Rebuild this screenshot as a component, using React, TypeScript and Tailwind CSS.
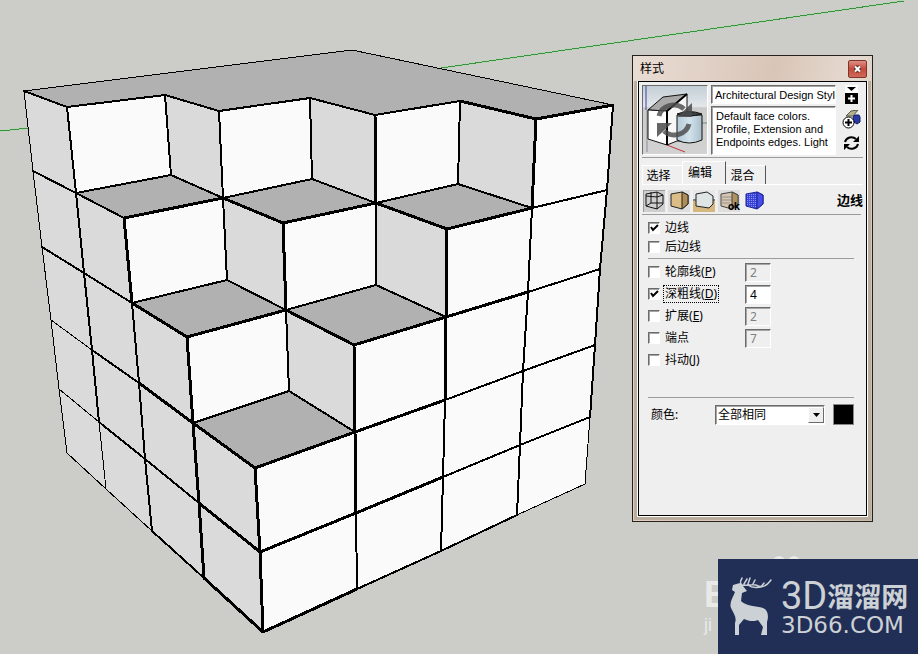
import React, { useState } from 'react';

const TOP = '#b1b1b1';
const SIDE = '#dadada';
const FRONT = '#fafafa';

const FACES: { fill: string; points: string }[] = [
    { fill: FRONT, points: '24,91 352,50 613,105 585,484 263,632 67,453' },
    { fill: TOP, points: '24,91 67,107 165,95 219,111 310,98 375,115 460,101 536,119 613,105 352,50' },
    { fill: SIDE, points: '24,91 67,107 76,193 124,218 132,303 187,337 193,423 255,468 263,632 67,453' },
    { fill: SIDE, points: '165,95 219,111 223,198 171,175' },
    { fill: SIDE, points: '310,98 375,115 376,203 312,179' },
    { fill: SIDE, points: '460,101 536,119 532,208 458,184' },
    { fill: SIDE, points: '223,198 283,223 286,310 227,280' },
    { fill: SIDE, points: '376,203 447,229 446,317 376,285' },
    { fill: SIDE, points: '286,310 354,345 355,432 289,391' },
    { fill: TOP, points: '76,193 171,175 223,198 124,218' },
    { fill: TOP, points: '223,198 312,179 376,203 283,223' },
    { fill: TOP, points: '376,203 458,184 532,208 447,229' },
    { fill: TOP, points: '132,303 227,280 286,310 187,337' },
    { fill: TOP, points: '286,310 376,285 446,317 354,345' },
    { fill: TOP, points: '193,423 289,391 355,432 255,468' },
];

// grouped by stroke width, nearer edges are heavier
const EDGES: { width: number; d: string }[] = [
    {
        width: 1,
        d: 'M24 91L352 50L613 105 M24 91L33 171L42 247L51 320L59 389L67 453 M51 320L92 350 M59 389L99 422L106 489 M67 453L106 489L152 531 M590 417L585 484L517 515',
    },
    {
        width: 2,
        d: 'M24 91L67 107L165 95L219 111L310 98L375 115L460 101 M67 107L76 193 M165 95L171 175 M219 111L223 198 M310 98L312 179 M460 101L458 184 M33 171L76 193L124 218 M76 193L171 175L223 198 M223 198L312 179L376 203L458 184L532 208L607 190 M613 105L607 190L600 269L595 345L590 417 M42 247L84 273L132 303 M76 193L84 273L92 350L99 422 M92 350L139 383 M99 422L145 459L199 503 M124 218L132 303L139 383L145 459L152 531 M132 303L227 280L286 310L376 285L446 317 M223 198L227 280 M376 203L376 285 M286 310L289 391L355 432 M193 423L289 391 M152 531L204 578 M528 292L600 269 M445 400L523 371L595 345 M443 477L520 445L590 417 M532 208L528 292L523 371L520 445L517 515 M445 400L443 477L441 551 M356 513L357 589 M357 589L441 551L517 515',
    },
    {
        width: 3,
        d: 'M460 101L536 119L613 105 M375 115L376 203 M536 119L532 208 M124 218L223 198L283 223L376 203L447 229L532 208 M124 218L132 303L187 337 M283 223L286 310 M447 229L446 317L445 400 M187 337L286 310L354 345L446 317L528 292 M139 383L193 423L255 468 M187 337L193 423L199 503L204 578L263 632 M354 345L355 432L356 513 M255 468L355 432L445 400 M199 503L260 552L356 513L443 477 M255 468L260 552L263 632L357 589',
    },
];

const Viewport = () => (
    <svg
        className="absolute inset-0 h-full w-full"
        viewBox="0 0 918 654"
        preserveAspectRatio="xMinYMin slice"
        shapeRendering="crispEdges"
    >
        <path d="M0 131L29 128M441 68L904 1" stroke="#a9dcaa" strokeWidth="2" />
        <path d="M0 131L29 128M441 68L904 1" stroke="#3f8d43" strokeWidth="1" />
        {FACES.map(f => <polygon key={f.points} fill={f.fill} points={f.points} />)}
        {EDGES.map(e => (
            <path key={e.width} d={e.d} fill="none" stroke="#000" strokeWidth={e.width} strokeLinejoin="round" strokeLinecap="round" />
        ))}
    </svg>
);

const StyleThumb = () => (
    <svg width="64" height="68" viewBox="0 0 64 68">
        <defs>
            <linearGradient id="sky" x1="0" y1="0" x2="0" y2="1">
                <stop offset="0" stopColor="#c3ced6" />
                <stop offset="0.3" stopColor="#e3e7ea" />
                <stop offset="0.32" stopColor="#cbcbca" />
                <stop offset="1" stopColor="#d2d2d2" />
            </linearGradient>
            <linearGradient id="tube" x1="0" y1="0" x2="1" y2="0">
                <stop offset="0" stopColor="#b4c9d6" />
                <stop offset="0.5" stopColor="#d3e3ec" />
                <stop offset="1" stopColor="#a9becb" />
            </linearGradient>
        </defs>
        <rect width="64" height="68" fill="url(#sky)" />
        <path d="M3 0V24" stroke="#3a43a8" />
        <path d="M4 24V66" stroke="#8b8b9c" />
        <path d="M24 59L42 66" stroke="#c2333c" />
        <path d="M59 37H64" stroke="#6f8f74" />
        <path d="M5 24L20 11L44 8L24 25Z" fill="#a9a9a9" stroke="#111" />
        <path d="M5 24L24 25V59L5 53Z" fill="#fff" stroke="#111" />
        <path d="M24 25L44 8V55H34L24 59Z" fill="#f6f6f6" stroke="#111" />
        <path d="M34 29V54Q46 60 59 54V29Z" fill="url(#tube)" stroke="#111" />
        <path d="M34 28Q46 23 59 28Q46 32 34 28Z" fill="#3b3f42" stroke="#111" />
        <path d="M24 25V59M44 8L24 25" stroke="#000" strokeWidth="2" />
        <g fill="none" stroke="#4a4a4a" strokeOpacity="0.82" strokeWidth="5">
            <path d="M16 30A15 14 0 0 1 41 23" />
            <path d="M46 38A15 14 0 0 1 21 45" />
        </g>
        <path d="M49 17V31H34ZM14 51V37H29Z" fill="#4a4a4a" fillOpacity="0.85" />
    </svg>
);

const PaneIcon = () => (
    <svg width="13" height="19" viewBox="0 0 13 19">
        <rect width="13" height="19" fill="#fff" />
        <path d="M2 2H11L6.500 6Z" fill="#000" />
        <path d="M0 8H13V19H0Z" fill="#000" />
        <path d="M6.500 10V17M3 13.500H10" stroke="#fff" strokeWidth="2" />
    </svg>
);

const CreateStyleIcon = () => (
    <svg width="19" height="19" viewBox="0 0 19 19">
        <path d="M4 6L9 1L16 0L11 6Z" fill="#b5b193" stroke="#555541" />
        <path d="M11 7L13 5H17L18 7V12L15 14L12 12Z" fill="#293aa4" stroke="#131d60" />
        <circle cx="6.500" cy="12.500" r="5.500" fill="#fff" stroke="#000" />
        <path d="M6.500 9V16M3 12.500H10" stroke="#000" strokeWidth="2" />
    </svg>
);

const UpdateIcon = () => (
    <svg width="17" height="16" viewBox="0 0 17 16">
        <path d="M2 7A6.500 6 0 0 1 13 4M15 9A6.500 6 0 0 1 4 12" fill="none" stroke="#000" strokeWidth="2" />
        <path d="M16 1V7H10ZM1 15V9H7Z" fill="#000" />
    </svg>
);

const BOX = 'M3 4L14 2L20 5V14L14 19L3 16Z';
const BOX_SIDE = 'M14 2L20 5V14L14 19Z';

const MODES: { name: string; bg: string; icon: React.ReactNode }[] = [
    {
        name: '边线设置',
        bg: 'bg-[#cfcfcf] shadow-[inset_1px_1px_0_#9a9a9a]',
        icon: <path d="M3 4L14 2L20 5V14L14 19L3 16ZM14 2V19M8 2V13M8 13H20M3 16L8 13M3 6L14 7L20 5" fill="none" stroke="#111" />,
    },
    {
        name: '平面设置',
        bg: 'bg-[#dedede]',
        icon: (
            <>
                <path d={BOX} fill="#dcbd85" stroke="#222" />
                <path d={BOX_SIDE} fill="#b08d55" stroke="#222" />
            </>
        ),
    },
    {
        name: '背景设置',
        bg: 'bg-[linear-gradient(#e8e8e8_50%,#d5b780_50%)]',
        icon: (
            <>
                <path d="M3 4L14 2L20 6V14L16 18L3 16Z" fill="#dfe4e4" stroke="#222" />
                <path d="M0 10H3M20 10H22" stroke="#222" />
            </>
        ),
    },
    {
        name: '水印设置',
        bg: 'bg-[#dedede]',
        icon: (
            <>
                <path d={BOX} fill="#d3c7b3" stroke="#444" />
                <path d="M3 7H14M3 10H14M3 13H12" stroke="#9c9281" />
                <path d={BOX_SIDE} fill="#b09260" stroke="#444" />
            </>
        ),
    },
    {
        name: '建模设置',
        bg: '',
        icon: (
            <>
                <defs>
                    <pattern id="mesh" width="2" height="2" patternUnits="userSpaceOnUse">
                        <rect width="2" height="2" fill="#3a45dc" />
                        <rect width="1" height="1" fill="#8a91ff" />
                    </pattern>
                </defs>
                <path d={BOX} fill="url(#mesh)" stroke="#1b2393" />
                <path d={BOX_SIDE} fill="#4650e8" stroke="#1b2393" />
            </>
        ),
    },
];

const SUNKEN = 'border border-[#6b6b6b] border-r-white border-b-white shadow-[inset_1px_1px_0_#a5a5a5]';

interface CheckRowProps {
    id: string;
    label: string;
    hotkey?: string;
    initial?: boolean;
    focused?: boolean;
    value?: string;
}

const CheckRow: React.FC<CheckRowProps> = ({ id, label, hotkey, initial = false, focused, value }) => {
    const [checked, setChecked] = useState(initial);
    return (
        <div className="flex h-[22px] items-center">
            <span className="relative mr-1 h-3 w-3">
                <input
                    id={id}
                    type="checkbox"
                    checked={checked}
                    onChange={e => setChecked(e.target.checked)}
                    className={`block h-3 w-3 appearance-none bg-white ${SUNKEN}`}
                />
                {checked && (
                    <svg className="pointer-events-none absolute inset-0" width="12" height="12" viewBox="0 0 12 12">
                        <path d="M3 5L5 8L10 3" fill="none" stroke="#000" strokeWidth="2" />
                    </svg>
                )}
            </span>
            <label htmlFor={id} className={`px-px leading-4 ${focused ? 'outline outline-dotted outline-black' : ''}`}>
                {label}
                {hotkey && <>(<u>{hotkey}</u>)</>}
            </label>
            {value && (
                <input
                    type="text"
                    aria-label={label}
                    defaultValue={value}
                    disabled={!checked}
                    className={`ml-auto mr-[83px] h-[19px] w-[26px] px-1 ${SUNKEN} ${checked ? 'bg-white' : 'bg-transparent text-[#808080]'}`}
                />
            )}
        </div>
    );
};

const StylesDialog = () => (
    <section className="flex w-[241px] flex-col border border-[#26211b] bg-[linear-gradient(100deg,#e9ddd4,#d9c5b8_45%,#e6dad0_70%,#c5b9a8)] text-xs text-black">
        <header className="flex h-[25px] items-center justify-between pr-[5px] pl-[7px]">
            <h1>样式</h1>
            <button aria-label="关闭" className="flex h-[18px] w-[19px] items-center justify-center rounded-xs border border-[#7b3630] bg-linear-to-b from-[#df8f83] via-[#c5493c] to-[#cf6a58]">
                <svg width="9" height="8" viewBox="0 0 9 8">
                    <path d="M2 1.500L7 6.500M7 1.500L2 6.500" stroke="#543030" strokeWidth="4" />
                    <path d="M2 1.500L7 6.500M7 1.500L2 6.500" stroke="#fff" strokeWidth="2" />
                </svg>
            </button>
        </header>
        <div className="mx-px mb-px border-x-3 border-b-3 border-[#b9ae9d]">
            <div className="border border-white">
                <div className="-mt-px min-h-[435px] border border-black bg-[#efefef] px-[3px] pt-[3px]">
                    <div className="flex">
                        <div className={`h-[70px] w-[66px] shrink-0 ${SUNKEN}`}><StyleThumb /></div>
                        <div className="ml-[3px] flex w-[125px] flex-col gap-[2px] font-['Liberation_Sans'] text-[11px]">
                            <input
                                aria-label="样式名称"
                                defaultValue="Architectural Design Style"
                                className={`h-[19px] w-full bg-white pl-[3px] ${SUNKEN}`}
                            />
                            <textarea
                                aria-label="样式说明"
                                defaultValue="Default face colors. Profile, Extension and Endpoints edges. Light"
                                className={`h-[49px] w-full resize-none overflow-hidden bg-white py-[3px] pl-1 leading-[13px] ${SUNKEN}`}
                            />
                        </div>
                        <div className="flex flex-1 flex-col items-center gap-[6px] pl-1">
                            <button className="bg-white" aria-label="显示辅助选择窗格"><PaneIcon /></button>
                            <button aria-label="创建新样式"><CreateStyleIcon /></button>
                            <button aria-label="更新样式"><UpdateIcon /></button>
                        </div>
                    </div>
                    <hr className="mt-[2px] border-[#9b9b9b]" />
                    <nav className="mt-[7px] flex h-5 border-b border-white">
                        <button className="w-10 border-t border-l border-white pt-[2px] pr-2">选择</button>
                        <button className="-mt-1 w-11 border-t border-l border-r border-white border-r-[#555] bg-[#efefef] pr-2">编辑</button>
                        <button className="w-10 border-t border-r border-white border-r-[#555] pt-[2px] pr-[6px]">混合</button>
                    </nav>
                    <div className="mt-[5px] flex h-[22px] items-center gap-[3px] pl-px">
                        {MODES.map(mode => (
                            <button key={mode.name} aria-label={mode.name} className={`relative h-[22px] w-[22px] ${mode.bg}`}>
                                <svg width="22" height="22" viewBox="0 0 22 22">{mode.icon}</svg>
                                {mode.name === '水印设置' && (
                                    <span className="absolute right-0 bottom-0 font-['Roboto'] text-[11px] leading-[11px] font-bold">ok</span>
                                )}
                            </button>
                        ))}
                        <h2 className="ml-auto text-[13px] font-bold">边线</h2>
                    </div>
                    <hr className="mt-[2px] mr-[2px] border-[#9b9b9b]" />
                    <div className="mr-[9px] ml-[6px]">
                        <div className="flex h-[43px] flex-col pt-[2px]">
                            <CheckRow id="edges" label="边线" initial />
                            <div className="-mt-[2px]"><CheckRow id="back-edges" label="后边线" /></div>
                        </div>
                        <hr className="border-[#9b9b9b]" />
                        <div className="pt-[2px]">
                            <CheckRow id="profiles" label="轮廓线" hotkey="P" value="2" />
                            <CheckRow id="depth" label="深粗线" hotkey="D" value="4" initial focused />
                            <CheckRow id="extension" label="扩展" hotkey="E" value="2" />
                            <CheckRow id="endpoints" label="端点" value="7" />
                            <CheckRow id="jitter" label="抖动" hotkey="J" />
                        </div>
                        <hr className="mt-[26px] border-[#9b9b9b]" />
                        <div className="mt-[6px] flex items-center">
                            <label htmlFor="edge-color" className="w-16 pl-[3px]">颜色:</label>
                            <div className="relative ml-[3px]">
                                <select id="edge-color" className={`h-5 w-[110px] appearance-none bg-white pl-[2px] ${SUNKEN}`}>
                                    <option>全部相同</option>
                                    <option>按材质</option>
                                    <option>按轴线</option>
                                </select>
                                <span className="pointer-events-none absolute top-[2px] right-px flex h-4 w-4 items-center justify-center border border-white border-r-[#6b6b6b] border-b-[#6b6b6b] bg-[#efefef]">
                                    <svg width="7" height="4" viewBox="0 0 7 4"><path d="M0 0H7L3.500 4Z" /></svg>
                                </span>
                            </div>
                            <button aria-label="边线颜色" className="ml-auto h-[21px] w-[21px] border border-[#888] bg-black" />
                        </div>
                    </div>
                </div>
            </div>
        </div>
    </section>
);

const Deer = () => (
    <svg width="46" height="60" viewBox="0 0 46 60" className="mt-[18px] shrink-0">
        <path
            fill="#ccd1d5"
            d="M3 8L10 6L13 9L17 14L12 16L11 24C16 29 26 29 33 31C38 33 39 39 37 45L37 58H31L33 50L28 43C24 45 18 44 14 42L9 48L9 58H5V46C7 41 4 37 1 31C-1 26 3 20 5 15L2 13Z"
        />
        <path
            fill="none"
            stroke="#ccd1d5"
            strokeWidth="1.500"
            strokeLinecap="round"
            d="M11 8C17 9 21 7 26 8C33 12 37 8 41 3M12 8C9 5 11 4 12 1M14 7L17 2M18 7L20 1M23 7L25 3M31 10L34 6M18 8C23 12 28 10 31 10"
        />
    </svg>
);

const SiteBadge = () => (
    <footer className="absolute right-0 bottom-0">
        <div className="absolute -top-[3px] left-[55px] flex gap-[3px]">
            <i className="h-3 w-3 rounded-full bg-[#e9e9e7]" />
            <i className="h-3 w-3 rounded-full bg-[#e9e9e7]" />
        </div>
        <div className="absolute top-4 -left-[14px] text-[#e9e9e7]">
            <p className="font-['Liberation_Sans'] text-4xl leading-10 font-bold">B</p>
            <p className="font-['Liberation_Sans'] text-lg leading-5">ji</p>
        </div>
        <div className="relative flex h-[95px] w-[200px] bg-[#212f56] pl-3 text-[#ccd1d5]">
            <Deer />
            <div className="ml-[5px] pt-[18px] whitespace-nowrap">
                <p className="flex items-center leading-[38px]">
                    <span className="font-['Roboto'] text-[38px]">3D</span>
                    <span className="font-['Noto_Sans_CJK_SC'] text-[27px] font-bold">溜溜网</span>
                </p>
                <p className="font-['DejaVu_Sans'] text-[23px] leading-5">3D66.COM</p>
            </div>
        </div>
    </footer>
);

export default function App() {
    return (
        <main className="relative flex min-h-screen items-start justify-end overflow-hidden bg-[#cccdc8] pt-[55px] pr-[45px] font-['Noto_Sans','Noto_Sans_CJK_SC',sans-serif]">
            <Viewport />
            <div className="relative"><StylesDialog /></div>
            <SiteBadge />
        </main>
    );
}
